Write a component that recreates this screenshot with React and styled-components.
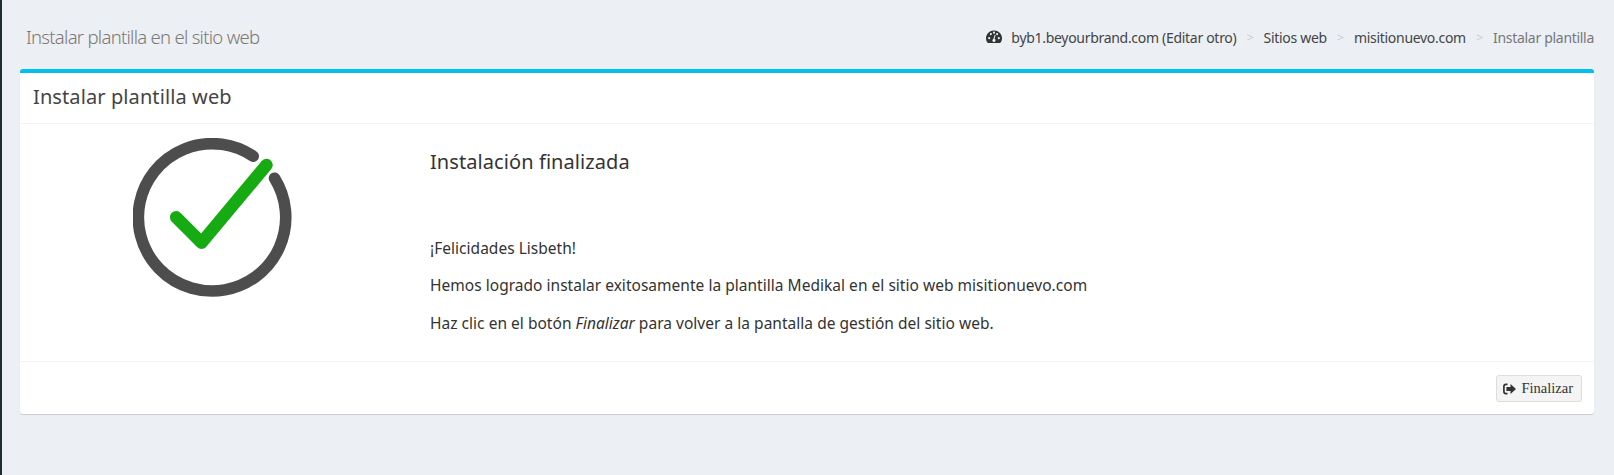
import React from 'react';
import styled, { createGlobalStyle } from 'styled-components';

const GlobalStyle = createGlobalStyle`
  html, body {
    margin: 0;
    padding: 0;
    height: 100%;
  }
  body {
    background: #ecf0f5;
    font-family: 'Noto Sans', 'Open Sans', sans-serif;
    color: #333;
  }
`;

const Page = styled.div`
  min-height: 475px;
  box-sizing: border-box;
  border-left: 2px solid #222d32;
  padding: 15px 20px 0 18px;
`;

const ContentHeader = styled.header`
  display: flex;
  align-items: center;
  justify-content: space-between;
  height: 42px;
  margin-bottom: 12px;
`;

const PageTitle = styled.h1`
  margin: 0 0 0 6px;
  font-size: 18.5px;
  font-weight: 300;
  letter-spacing: -0.72px;
  color: #7d7873;
`;

const Breadcrumb = styled.ol`
  display: flex;
  align-items: center;
  margin: 2px 0 0;
  padding: 0;
  list-style: none;
  font-size: 14px;
  letter-spacing: -0.3px;
`;

const Crumb = styled.li`
  display: flex;
  align-items: center;
  color: ${(p) => (p.$active ? '#777' : '#444')};
  &:not(:first-child)::before {
    content: '>';
    padding: 0 10px;
    color: #ccc;
    font-size: 13px;
  }
`;

const GaugeIcon = styled.svg`
  width: 16px;
  height: 14px;
  margin-right: 9px;
`;

const Card = styled.section`
  background: #fff;
  border-top: 4px solid #00c0ef;
  border-radius: 3px;
  box-shadow: 0 1px 1px rgba(0, 0, 0, 0.15);
`;

const CardHeader = styled.div`
  padding: 9px 13px;
  height: 51px;
  box-sizing: border-box;
  border-bottom: 1px solid #f4f4f4;
`;

const CardTitle = styled.h3`
  margin: 0;
  font-size: 20px;
  line-height: 29px;
  font-weight: 400;
  letter-spacing: 0.1px;
  color: #444;
`;

const CardBody = styled.div`
  display: flex;
  height: 237px;
`;

const IconColumn = styled.div`
  width: 385px;
  flex: none;
  display: flex;
  justify-content: center;
  padding-top: 14px;
  box-sizing: border-box;
`;

const Message = styled.div`
  padding: 26px 0 0 25px;
`;

const MessageTitle = styled.h4`
  margin: 0 0 64px;
  font-size: 20px;
  line-height: 24px;
  font-weight: 400;
  letter-spacing: 0.08px;
  color: #333;
`;

const Paragraph = styled.p`
  margin: 0 0 16.3px;
  font-size: 15.5px;
  line-height: 21px;
  letter-spacing: 0.025px;
  color: #333;
`;

const CardFooter = styled.div`
  display: flex;
  justify-content: flex-end;
  height: 53px;
  box-sizing: border-box;
  padding: 13px 12px 0;
  border-top: 1px solid #f4f4f4;
`;

const FinishButton = styled.button`
  display: flex;
  align-items: center;
  gap: 5px;
  height: 27px;
  padding: 0 8px 0 6px;
  box-sizing: border-box;
  background: #f4f4f4;
  border: 1px solid #ddd;
  border-radius: 3px;
  font-family: 'Liberation Serif', serif;
  font-size: 14.5px;
  color: #333;
`;

const ButtonIcon = styled.svg`
  width: 13px;
  height: 12px;
`;

const SuccessIcon = () => (
  <svg width="160" height="160" viewBox="0 0 160 160">
    <path
      d="M120.2 18.2 A73.7 73.7 0 1 0 141.5 40.2"
      fill="none"
      stroke="#4d4d4d"
      strokeWidth="11.6"
      strokeLinecap="round"
    />
    <path
      d="M43.2 79.3 L68.5 104.7 L133.5 27"
      fill="none"
      stroke="#17ab13"
      strokeWidth="12.5"
      strokeLinecap="round"
      strokeLinejoin="round"
    />
  </svg>
);

export default function App() {
  return (
    <>
      <GlobalStyle />
      <Page>
        <ContentHeader>
          <PageTitle>Instalar plantilla en el sitio web</PageTitle>
          <Breadcrumb>
            <Crumb>
              <GaugeIcon viewBox="0 0 15 13">
                <path
                  fillRule="evenodd"
                  fill="#333"
                  d="M7.5 0.3a7.4 7.4 0 0 0-6.4 11.2c0.2 0.4 0.6 0.6 1 0.6h10.8c0.4 0 0.8-0.2 1-0.6A7.4 7.4 0 0 0 7.5 0.3zM3 8.6a1 1 0 1 1 0-2 1 1 0 0 1 0 2zM4.6 4.8a1 1 0 1 1 0-2 1 1 0 0 1 0 2zM7.5 3.4a1 1 0 1 1 0-2 1 1 0 0 1 0 2zM8.9 10.2a1.5 1.5 0 0 1-2.9-0.6c0-0.6 0.4-1.1 0.9-1.3l1.2-3.6c0.2-0.6 1.1-0.3 0.9 0.3L8 8.1c0.6 0.3 1 0.8 0.9 2.1zM12 8.6a1 1 0 1 1 0-2 1 1 0 0 1 0 2zM10.4 4.8a1 1 0 1 1 0-2 1 1 0 0 1 0 2z"
                />
              </GaugeIcon>
              byb1.beyourbrand.com (Editar otro)
            </Crumb>
            <Crumb>Sitios web</Crumb>
            <Crumb>misitionuevo.com</Crumb>
            <Crumb $active>Instalar plantilla</Crumb>
          </Breadcrumb>
        </ContentHeader>
        <Card>
          <CardHeader>
            <CardTitle>Instalar plantilla web</CardTitle>
          </CardHeader>
          <CardBody>
            <IconColumn>
              <SuccessIcon />
            </IconColumn>
            <Message>
              <MessageTitle>Instalación finalizada</MessageTitle>
              <Paragraph>¡Felicidades Lisbeth!</Paragraph>
              <Paragraph>Hemos logrado instalar exitosamente la plantilla Medikal en el sitio web misitionuevo.com</Paragraph>
              <Paragraph>
                Haz clic en el botón <em>Finalizar</em> para volver a la pantalla de gestión del sitio web.
              </Paragraph>
            </Message>
          </CardBody>
          <CardFooter>
            <FinishButton>
              <ButtonIcon viewBox="0 0 13 12">
                <path d="M4.5 1.4H3A2.2 2.2 0 0 0 0.9 3.6v4.8A2.2 2.2 0 0 0 3 10.6h1.5" fill="none" stroke="#333" strokeWidth="1.7" />
                <path d="M3.4 3.9h4.1V1L13 6l-5.5 5V8.1H3.4z" fill="#333" />
              </ButtonIcon>
              Finalizar
            </FinishButton>
          </CardFooter>
        </Card>
      </Page>
    </>
  );
}
